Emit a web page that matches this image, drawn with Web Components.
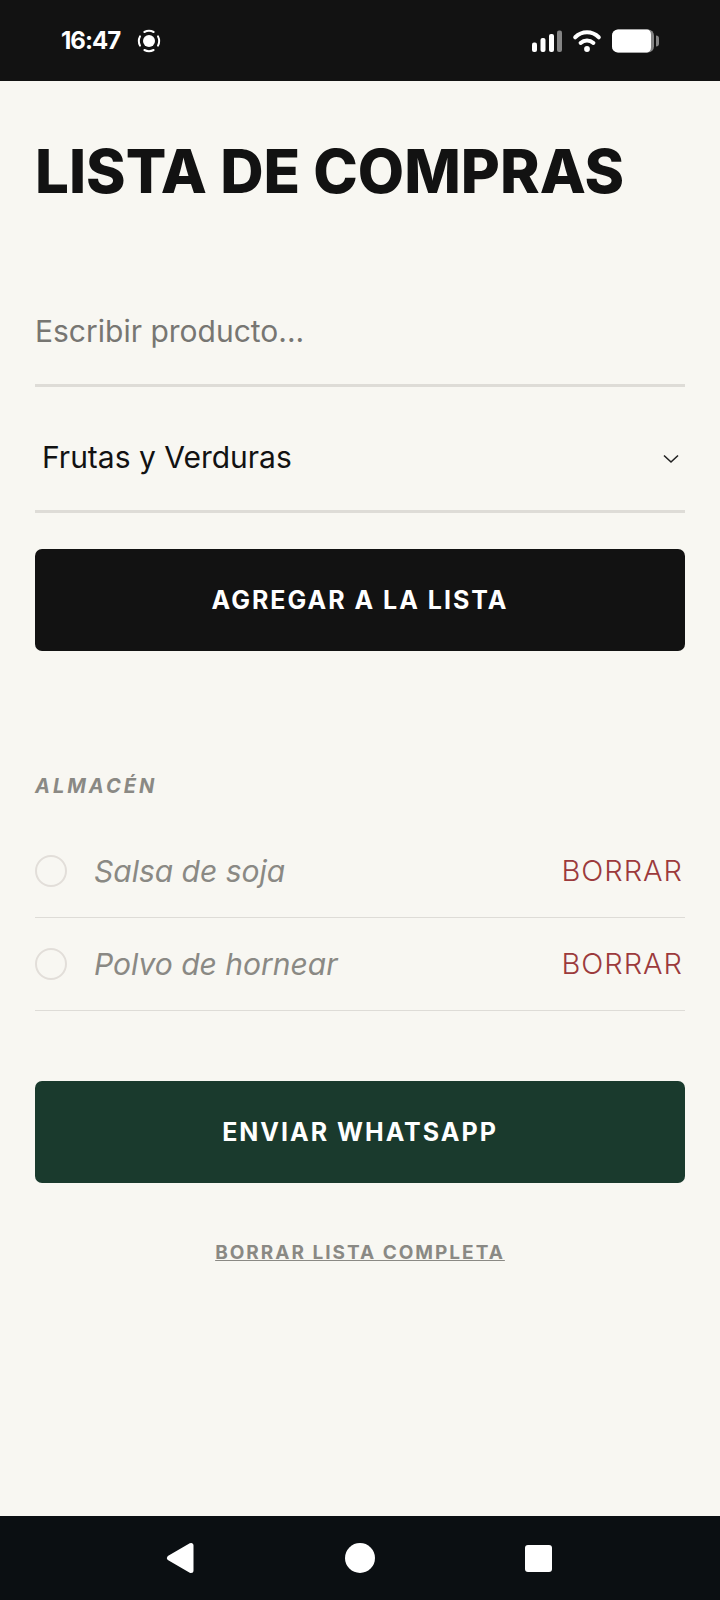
<!DOCTYPE html>
<html lang="es">
<head>
<meta charset="utf-8">
<meta name="viewport" content="width=device-width, initial-scale=1">
<title>Lista de compras</title>
<style>
    body {
        margin: 0;
        background: #f8f7f2;
        color: #121212;
        font-family: Inter, "Open Sans", sans-serif;
        --ink: #121212;
        --muted: #8a8984;
        --line: #dedcd7;
        --danger: #9c3a3c;
        --green: #1a3a2d;
    }
</style>
</head>
<body>
<shopping-app></shopping-app>

<script>
class StatusBar extends HTMLElement {
    constructor() {
        super();
        this.attachShadow({ mode: 'open' });
    }

    connectedCallback() {
        this.shadowRoot.innerHTML = `
            <style>
                :host {
                    display: flex;
                    justify-content: space-between;
                    align-items: center;
                    height: 81px;
                    padding: 0 60px;
                    box-sizing: border-box;
                    background: #121212;
                    color: #fff;
                }
                .side { display: flex; align-items: center; gap: 10px; }
                .left { gap: 16px; }
                time { font-size: 24px; line-height: 32px; font-weight: 700; letter-spacing: -1px; padding-left: 1px; }
                svg { display: block; }
            </style>
            <div class="side left">
                <time>16:47</time>
                <svg width="26" height="26" viewBox="0 0 26 26" fill="none" stroke="#fff" stroke-width="2" stroke-linecap="round">
                    <circle cx="13" cy="13" r="6" fill="#fff" stroke="none"/>
                    <path d="M8.4 4a10.2 10.2 0 0 1 9.2 0M8.4 22a10.2 10.2 0 0 0 9.2 0M4 8.4a10.2 10.2 0 0 0 0 9.2M22 8.4a10.2 10.2 0 0 1 0 9.2"/>
                </svg>
            </div>
            <div class="side">
                <svg width="30" height="24" viewBox="0 0 30 24" fill="#fff">
                    <rect x="0" y="13.5" width="5" height="9.5" rx="2"/>
                    <rect x="8.5" y="9" width="5" height="14" rx="2"/>
                    <rect x="17" y="5" width="5" height="18" rx="2"/>
                    <rect x="25" y="1.5" width="5" height="21.5" rx="2" fill="#858585"/>
                </svg>
                <svg width="30" height="24" viewBox="0 0 30 24" fill="none" stroke="#fff" stroke-width="4" stroke-linecap="round">
                    <path d="M3.2 8.3C10 1.7 20 1.7 26.8 8.3M8.6 14C12.3 10.7 17.7 10.7 21.4 14"/>
                    <circle cx="15" cy="20" r="2.9" fill="#fff" stroke="none"/>
                </svg>
                <svg width="48" height="24" viewBox="0 0 48 24">
                    <rect x="0" y="0.5" width="42" height="23" rx="6" fill="#858585"/>
                    <path d="M6 .5h29a4 5 0 0 1 4 5v13a4 5 0 0 1-4 5H6a6 6 0 0 1-6-6v-11a6 6 0 0 1 6-6z" fill="#fff"/>
                    <path d="M44 6.5c2 0 3 1 3 3v5c0 2-1 3-3 3z" fill="#858585"/>
                </svg>
            </div>
        `;
    }
}

class ProductForm extends HTMLElement {
    constructor() {
        super();
        this.attachShadow({ mode: 'open' });
    }

    connectedCallback() {
        this.shadowRoot.innerHTML = `
            <style>
                :host { display: block; }
                form { display: flex; flex-direction: column; }
                .field {
                    display: grid;
                    align-items: center;
                    border-bottom: 3px solid var(--line);
                    margin-bottom: 17px;
                }
                .field:last-of-type { margin-bottom: 36px; }
                input, select {
                    grid-area: 1 / 1;
                    width: 100%;
                    height: 106px;
                    margin: 0;
                    padding: 0;
                    box-sizing: border-box;
                    border: 0;
                    border-radius: 0;
                    outline: 0;
                    background: transparent;
                    color: var(--ink);
                    font: 400 30px/40px Inter, "Open Sans", sans-serif;
                }
                input::placeholder { color: #777672; opacity: 1; }
                select { appearance: none; padding: 0 40px 0 7px; }
                svg { grid-area: 1 / 1; justify-self: end; margin: 4px 6px 0 0; pointer-events: none; }
            </style>
            <form>
                <div class="field">
                    <input type="text" id="product" aria-label="Producto" placeholder="Escribir producto...">
                </div>
                <div class="field">
                    <select id="category" aria-label="Categoría">
                        <option>Frutas y Verduras</option>
                        <option>Almacén</option>
                    </select>
                    <svg width="16" height="10" viewBox="0 0 16 10" fill="none" stroke="#222" stroke-width="1.6">
                        <path d="M1 1.5l7 6.5 7-6.5"/>
                    </svg>
                </div>
                <action-button>AGREGAR A LA LISTA</action-button>
            </form>
        `;

        this.shadowRoot.querySelector('action-button').addEventListener('click', () => {
            const input = this.shadowRoot.getElementById('product');
            const name = input.value.trim();
            if (!name) return;
            this.dispatchEvent(new CustomEvent('product-add', { detail: { name }, bubbles: true, composed: true }));
            input.value = '';
        });
    }
}

class ActionButton extends HTMLElement {
    constructor() {
        super();
        this.attachShadow({ mode: 'open' });
    }

    connectedCallback() {
        this.shadowRoot.innerHTML = `
            <style>
                :host { display: block; --fill: var(--ink); }
                :host([variant="send"]) { --fill: var(--green); }
                button {
                    display: block;
                    width: 100%;
                    padding: 35px 20px;
                    border: 0;
                    border-radius: 7px;
                    background: var(--fill);
                    color: #fff;
                    font: 700 25px/32px Inter, "Open Sans", sans-serif;
                    letter-spacing: 2px;
                    cursor: pointer;
                }
            </style>
            <button type="button"><slot></slot></button>
        `;
    }
}

class ShoppingItem extends HTMLElement {
    constructor() {
        super();
        this.attachShadow({ mode: 'open' });
    }

    connectedCallback() {
        this.shadowRoot.innerHTML = `
            <style>
                :host { display: flex; align-items: center; border-bottom: 1px solid var(--line); }
                label {
                    flex: 1;
                    display: flex;
                    align-items: center;
                    gap: 27px;
                    color: var(--muted);
                    font-size: 30px;
                    line-height: 40px;
                    font-style: italic;
                }
                input {
                    appearance: none;
                    width: 32px;
                    height: 32px;
                    margin: 0;
                    border: 2px solid #e2ded9;
                    border-radius: 50%;
                }
                input:checked { background: var(--green); }
                button {
                    padding: 26px 2px 26px 0;
                    border: 0;
                    background: none;
                    color: var(--danger);
                    font: 300 29px/40px Inter, "Open Sans", sans-serif;
                    letter-spacing: 1px;
                    cursor: pointer;
                }
            </style>
            <label><input type="checkbox"><slot></slot></label>
            <button type="button">BORRAR</button>
        `;

        this.shadowRoot.querySelector('button').addEventListener('click', () => this.remove());
    }
}

class ProductGroup extends HTMLElement {
    constructor() {
        super();
        this.attachShadow({ mode: 'open' });
    }

    connectedCallback() {
        this.shadowRoot.innerHTML = `
            <style>
                :host { display: block; }
                h2 {
                    margin: 0 0 25px;
                    color: var(--muted);
                    font-size: 20px;
                    line-height: 28px;
                    font-weight: 700;
                    font-style: italic;
                    letter-spacing: 3px;
                }
            </style>
            <h2>${this.getAttribute('name')}</h2>
            <slot></slot>
        `;
    }
}

class NavBar extends HTMLElement {
    constructor() {
        super();
        this.attachShadow({ mode: 'open' });
    }

    connectedCallback() {
        this.shadowRoot.innerHTML = `
            <style>
                :host { display: block; background: #0b0f12; }
                nav { display: flex; padding: 0 12.5%; }
                button {
                    flex: 1;
                    display: flex;
                    justify-content: center;
                    padding: 26px 0;
                    border: 0;
                    background: none;
                }
            </style>
            <nav>
                <button type="button" aria-label="Atrás">
                    <svg width="32" height="32" viewBox="0 0 32 32" fill="#fff" stroke="#fff" stroke-width="5" stroke-linejoin="round"><path d="M5.5 16L27 3.5v25z"/></svg>
                </button>
                <button type="button" aria-label="Inicio">
                    <svg width="32" height="32" viewBox="0 0 32 32" fill="#fff"><circle cx="16" cy="16" r="15"/></svg>
                </button>
                <button type="button" aria-label="Recientes">
                    <svg width="32" height="32" viewBox="0 0 32 32" fill="#fff"><rect x="1" y="3" width="27" height="27" rx="3"/></svg>
                </button>
            </nav>
        `;
    }
}

class ShoppingApp extends HTMLElement {
    constructor() {
        super();
        this.attachShadow({ mode: 'open' });
    }

    connectedCallback() {
        this.shadowRoot.innerHTML = `
            <style>
                :host { display: flex; flex-direction: column; min-height: 100vh; }
                main { flex: 1; padding: 54px 35px 40px; }
                h1 {
                    margin: 0 0 71px;
                    font-size: 60px;
                    line-height: 72px;
                    font-weight: 800;
                }
                product-group { margin: 121px 0 70px; }
                .clear {
                    display: block;
                    margin: 56px auto 0;
                    padding: 0;
                    border: 0;
                    background: none;
                    color: var(--muted);
                    font: 700 19px/28px Inter, "Open Sans", sans-serif;
                    letter-spacing: 2px;
                    text-decoration: underline;
                    cursor: pointer;
                }
            </style>
            <status-bar></status-bar>
            <main>
                <h1>LISTA DE COMPRAS</h1>
                <product-form></product-form>
                <product-group name="ALMACÉN">
                    <shopping-item>Salsa de soja</shopping-item>
                    <shopping-item>Polvo de hornear</shopping-item>
                </product-group>
                <action-button variant="send">ENVIAR WHATSAPP</action-button>
                <button class="clear" type="button">BORRAR LISTA COMPLETA</button>
            </main>
            <nav-bar></nav-bar>
        `;

        const group = this.shadowRoot.querySelector('product-group');
        this.shadowRoot.addEventListener('product-add', (e) => {
            const item = document.createElement('shopping-item');
            item.textContent = e.detail.name;
            group.append(item);
        });
        this.shadowRoot.querySelector('.clear').addEventListener('click', () => group.replaceChildren());
    }
}

customElements.define('status-bar', StatusBar);
customElements.define('action-button', ActionButton);
customElements.define('product-form', ProductForm);
customElements.define('shopping-item', ShoppingItem);
customElements.define('product-group', ProductGroup);
customElements.define('nav-bar', NavBar);
customElements.define('shopping-app', ShoppingApp);
</script>
</body>
</html>
